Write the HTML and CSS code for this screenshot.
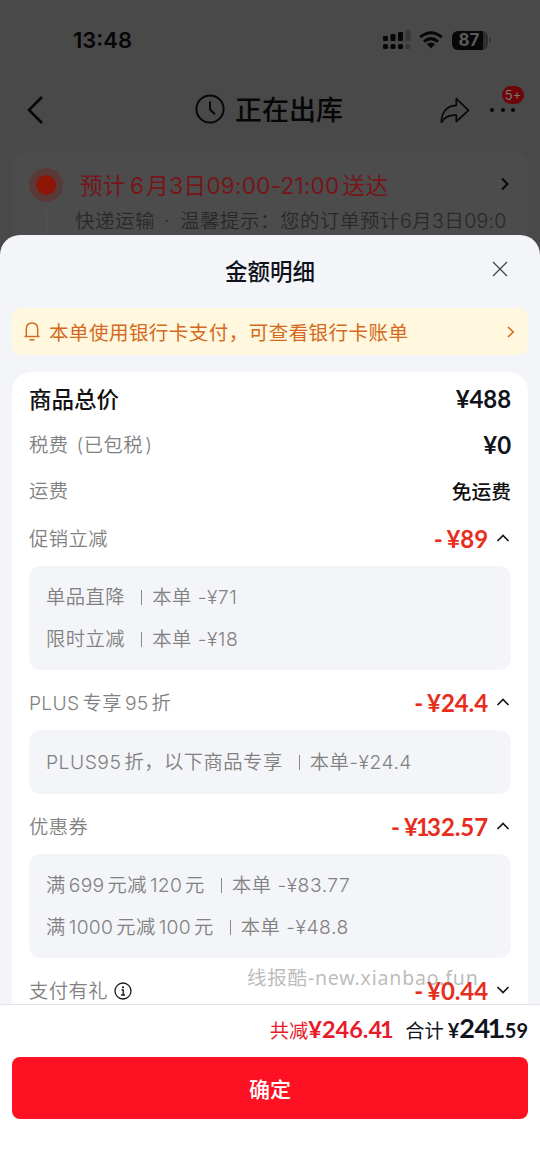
FILE: index.html
```html
<!DOCTYPE html>
<html lang="zh-CN">
<head>
<meta charset="utf-8">
<title>金额明细</title>
<link rel="stylesheet" href="styles.css">
</head>
<body>
<div class="screen">
  <div class="order">
    <div class="status">
      <span class="time">13:48</span>
      <div class="status-icons">
        <svg width="28" height="20" viewBox="0 0 28 20"><g fill="#070707"><rect x="0" y="6" width="5" height="5" rx="1.2"/><rect x="7.5" y="4" width="5" height="7" rx="1.2"/><rect x="15" y="2" width="5" height="9" rx="1.2"/><rect x="0" y="14" width="5" height="5" rx="1.6"/><rect x="7.5" y="14" width="5" height="5" rx="1.6"/><rect x="15" y="14" width="5" height="5" rx="1.6"/></g><g fill="#383838"><rect x="22.5" y="0" width="5" height="11" rx="1.2"/><rect x="22.5" y="14" width="5" height="5" rx="1.6"/></g></svg>
        <svg class="wifi" width="24" height="18" viewBox="0 0 24 18"><g fill="none" stroke="#070707" stroke-width="3"><path d="M1.2 6.2Q12-2.6 22.8 6.2"/><path d="M5 10.6Q12 4.600 19 10.600"/></g><path d="M12 17.200L7.800 12.900Q12 9.900 16.200 12.900Z" fill="#070707"/></svg>
        <div class="battery"><span>87</span></div><i class="battery-tip"></i>
      </div>
    </div>
    <div class="nav">
      <svg class="back" width="18" height="30" viewBox="0 0 18 30"><path d="M16 2L3 15L16 28" fill="none" stroke="#070707" stroke-width="2.600"/></svg>
      <div class="nav-title">
        <svg width="30" height="30" viewBox="0 0 30 30"><g fill="none" stroke="#070707" stroke-width="2"><circle cx="15" cy="15" r="13.600"/><path d="M15 7.500V15.500L20 20.300"/></g></svg>
        <span>正在出库</span>
      </div>
      <div class="nav-actions">
        <svg width="30" height="27" viewBox="0 0 30 27"><path d="M16.300 1.500L28.500 13.300L16.300 24.500V18.200C9 17.700 4.600 20 1.500 25.200C1.500 15.500 6.500 8.700 16.300 8.300Z" fill="none" stroke="#070707" stroke-width="1.700" stroke-linejoin="round"/></svg>
        <div class="more"><i></i><i></i><i></i><b>5+</b></div>
      </div>
    </div>
    <div class="delivery">
      <div class="track"><i class="dot"></i><i class="line"></i></div>
      <div class="delivery-text">
        <div class="eta"><span class="eta-text">预计<span class="n n-gap">6</span>月<span class="n">3</span>日<span class="n">09:00-21:00</span><span class="thin"> </span>送达</span>
          <svg width="10" height="14" viewBox="0 0 10 14"><path d="M2 1.500L7.500 7L2 12.500" fill="none" stroke="#070707" stroke-width="1.900"/></svg></div>
        <div class="tip">快递运输<span class="mid">·</span>温馨提示：<span class="tip-end">您的订单预计<span class="n">6</span>月<span class="n">3</span>日<span class="n">09:0</span></span></div>
      </div>
    </div>
  </div>

  <div class="sheet">
    <div class="sheet-head">
      <h1>金额明细</h1>
      <svg class="close" width="16" height="16" viewBox="0 0 16 16"><path d="M1 1L15 15M15 1L1 15" stroke="#44464b" stroke-width="1.300" fill="none"/></svg>
    </div>
    <div class="notice">
      <svg width="16" height="19" viewBox="0 0 16 19"><path d="M.500 14.500H15.500M2.300 14.500V7.300C2.300 3.300 4.500 1 8 1S13.700 3.300 13.700 7.300V14.500M5.500 17.700H10.500" fill="none" stroke="#d36a20" stroke-width="1.500"/></svg>
      <span>本单使用银行卡支付，可查看银行卡账单</span>
      <svg class="go" width="8" height="12" viewBox="0 0 8 12"><path d="M1 1L6.200 6L1 11" fill="none" stroke="#d36a20" stroke-width="1.600"/></svg>
    </div>
    <div class="detail">
      <div class="row"><span class="total-label">商品总价</span><span class="price">¥488</span></div>
      <div class="row"><span>税费<span class="paren-open">(</span>已包税<span class="paren-close">)</span></span><span class="price">¥0</span></div>
      <div class="row"><span>运费</span><span class="free">免运费</span></div>

      <div class="row fold first"><span>促销立减</span><span class="price cut"><em>-</em>¥89</span><svg class="arrow" width="14" height="8" viewBox="0 0 14 8"><path d="M1.500 7L7 1.500L12.500 7"/></svg></div>
      <div class="box">
        <p>单品直降<i class="bar"></i>本单<span class="n sp">-¥71</span></p>
        <p>限时立减<i class="bar"></i>本单<span class="n sp">-¥18</span></p>
      </div>

      <div class="row fold"><span><span class="n">PLUS</span><span class="thin"> </span>专享<span class="thin"> </span><span class="n">95</span><span class="thin"> </span>折</span><span class="price cut"><em>-</em>¥24.4</span><svg class="arrow" width="14" height="8" viewBox="0 0 14 8"><path d="M1.500 7L7 1.500L12.500 7"/></svg></div>
      <div class="box single">
        <p><span class="n">PLUS95</span><span class="thin"> </span>折，以下商品专享<i class="bar"></i>本单<span class="n">-¥24.4</span></p>
      </div>

      <div class="row fold"><span>优惠券</span><span class="price cut"><em>-</em>¥<span class="one">1</span>32.57</span><svg class="arrow" width="14" height="8" viewBox="0 0 14 8"><path d="M1.500 7L7 1.500L12.500 7"/></svg></div>
      <div class="box">
        <p>满<span class="thin"> </span><span class="n">699</span><span class="thin"> </span>元减<span class="thin"> </span><span class="n">120</span><span class="thin"> </span>元<i class="bar"></i>本单<span class="n sp">-¥83.77</span></p>
        <p>满<span class="thin"> </span><span class="n">1000</span><span class="thin"> </span>元减<span class="thin"> </span><span class="n">100</span><span class="thin"> </span>元<i class="bar"></i>本单<span class="n sp">-¥48.8</span></p>
      </div>

      <div class="row fold"><span>支付有礼</span><svg class="info" width="18" height="18" viewBox="0 0 18 18"><circle cx="9" cy="9" r="8" fill="none" stroke="#171717" stroke-width="1.300"/><circle cx="9" cy="5.300" r="1.100" fill="#171717"/><path d="M7.500 8H9.200V13M7.200 13H11" fill="none" stroke="#171717" stroke-width="1.300"/></svg><span class="price cut"><em>-</em>¥0.44</span><svg class="arrow" width="14" height="8" viewBox="0 0 14 8"><path d="M1.500 1L7 6.500L12.500 1"/></svg></div>
    </div>
    <div class="footer">
      <div class="sum"><span class="saved">共减</span><b class="saved-num">¥246.4<span class="one">1</span></b><span class="sum-label">合计</span><b class="pay"><small>¥</small>24<span class="one">1</span><small>.59</small></b></div>
      <button class="confirm">确定</button>
    </div>
    <div class="watermark">线报酷-new.xianbao.fun</div>
  </div>
</div>
</body>
</html>
```

FILE: styles.css
```css
* { box-sizing: border-box; }
body { margin: 0; font-family: Inter, "Noto Sans CJK SC", sans-serif; white-space: nowrap; }
svg { display: block; flex: none; }
i, em { font-style: normal; }
.screen { width: 540px; height: 1173px; position: relative; overflow: hidden; background: #494949; }

.order { height: 260px; display: flex; flex-direction: column; overflow: hidden; color: #070707; }
.status { height: 80px; padding: 0 50px 0 73px; display: flex; align-items: center; justify-content: space-between; }
.time { font-size: 22px; font-weight: 600; line-height: 80px; }
.status-icons { display: flex; align-items: center; margin-right: -1px; }
.wifi { margin-left: 8px; }
.battery { width: 36px; height: 19px; margin-left: 9px; border-radius: 6px; background: linear-gradient(90deg, #070707 31px, #303030 31px); }
.battery span { display: block; width: 34px; text-align: center; font-size: 17px; line-height: 19px; font-weight: 700; color: #5a5a5a; }
.battery-tip { width: 2px; height: 6px; margin-left: 1px; background: #383838; border-radius: 0 2px 2px 0; }
.nav { height: 58px; padding: 0 24px 0 26px; display: grid; grid-template-columns: 1fr auto 1fr; align-items: center; }
.nav-title { display: flex; align-items: center; gap: 10px; margin-right: 4px; font-size: 27px; font-weight: 500; line-height: 58px; }
.nav-title svg { margin-top: -2px; }
.nav-title span { padding-top: 2px; }
.nav-actions { justify-self: end; display: flex; align-items: center; gap: 20px; }
.more { position: relative; display: flex; gap: 6.500px; width: 26px; }
.more i { width: 4px; height: 4px; flex: none; border-radius: 50%; background: #070707; }
.more b { position: absolute; left: 12px; top: -22px; width: 22px; height: 18px; border-radius: 9px; background: #6e0509; color: #777; font: 400 13px/18px Inter, sans-serif; text-align: center; }
.delivery { margin: 13px 12px 0; padding: 17px 17px 0; height: 120px; border-radius: 16px; background: #4c4c4c; display: flex; }
.track { width: 34px; display: flex; flex-direction: column; align-items: center; gap: 7px; flex: none; }
.dot { width: 34px; height: 34px; border: 7px solid #5a3a39; border-radius: 50%; background: #8e1607; }
.line { width: 1px; height: 40px; background: #555; }
.delivery-text { flex: 1; }
.eta { height: 32px; margin-bottom: 2px; padding-left: 17px; padding-right: 1px; display: flex; align-items: center; justify-content: space-between; color: #771519; font-size: 22.500px; letter-spacing: .5px; }
.eta .n { letter-spacing: .25px; }
.eta .n-gap { margin: 0 2px 0 4px; }
.tip { height: 36px; line-height: 38px; padding-left: 12px; color: #292929; font-size: 19.500px; letter-spacing: .5px; font-weight: 350; }
.tip .mid { margin: 0 10px 0 9px; }

.sheet { position: absolute; left: 0; top: 235px; width: 540px; height: 938px; border-radius: 20px 20px 0 0; background: #f4f5f9; display: flex; flex-direction: column; overflow: hidden; }
.sheet-head { height: 73px; flex: none; display: grid; grid-template-columns: 1fr auto 1fr; align-items: center; padding: 0 32px; }
h1 { grid-column: 2; margin: 0; font-size: 22.500px; line-height: 73px; font-weight: 500; color: #10131b; }
.close { justify-self: end; margin-top: -5px; }
.notice { height: 47px; flex: none; margin: 0 12px; padding: 0 13px 0 12px; border-radius: 9px; background: #fff7de; display: flex; align-items: center; color: #d36a20; font-size: 19.500px; letter-spacing: .47px; }
.notice span { margin-left: 9px; }
.go { margin-left: auto; }
.detail { flex: 1; min-height: 0; margin: 17px 12px 0; padding: 4px 17px 0; border-radius: 20px 20px 0 0; background: #fff; overflow: hidden; color: #818181; font-size: 19.300px; letter-spacing: .5px; font-weight: 350; }
.row { height: 46px; display: flex; align-items: center; }
.row > span:first-child { margin-top: -2px; }
.total-label { font-size: 22.500px; letter-spacing: 0; font-weight: 500; color: #111; }
.price { margin-left: auto; font: 700 24px/1 Lato, sans-serif; letter-spacing: -.1px; color: #10131b; }
.price em { margin-right: 4px; }
.free { margin-left: auto; margin-top: -2px; font-size: 19.800px; letter-spacing: 0; font-weight: 500; color: #111; }
.paren-open { margin-left: 8px; }
.paren-close { margin-left: 2px; }
.fold { height: 54px; margin-top: 6px; }
.first { margin-top: -2px; }
.cut { color: #e82d1d; }
.one { margin: 0 -2.500px 0 -2px; }
.arrow { margin: -3px 1px 0 8px; }
.arrow path { fill: none; stroke: #171717; stroke-width: 1.700; }
.info { margin-left: 6px; }
.thin { font-size: 9px; }
.n { letter-spacing: .25px; }
.sp { margin-left: 6px; }
.sp, .single .n { letter-spacing: .5px; }
.box { padding: 10px 17px; border-radius: 12px; background: #f4f5f9; }
.single { padding: 11px 17px; }
.box p { margin: 0; height: 42px; line-height: 42px; }
.bar { display: inline-block; width: 1px; height: 15px; margin: 0 10px 0 16px; background: #8b8b8b; vertical-align: -1px; }
.footer { height: 169px; flex: none; padding: 0 12px; background: #fff; border-top: 1px solid #e3e4e7; }
.sum { height: 52px; display: flex; align-items: baseline; justify-content: flex-end; font-size: 19.300px; line-height: 45px; color: #10131b; }
.saved { color: #e91b2b; }
.sum b { font-family: Lato, sans-serif; }
.saved-num { color: #e91b2b; font-size: 23.500px; }
.sum-label { margin-left: 14px; margin-right: 4px; }
.pay { font-size: 27px; letter-spacing: -.6px; }
.pay small { font-size: 20px; letter-spacing: 0; }
.confirm { display: block; width: 100%; height: 62px; border: 0; padding: 0; border-radius: 8px; background: #fe1122; color: #fff; font: 500 21px/62px "Noto Sans CJK SC", sans-serif; }
.watermark { position: absolute; left: 247px; top: 729px; font: 400 19.500px/28px "Noto Sans", "Noto Sans CJK SC", sans-serif; letter-spacing: .8px; color: rgba(120, 120, 120, .5); }
```
